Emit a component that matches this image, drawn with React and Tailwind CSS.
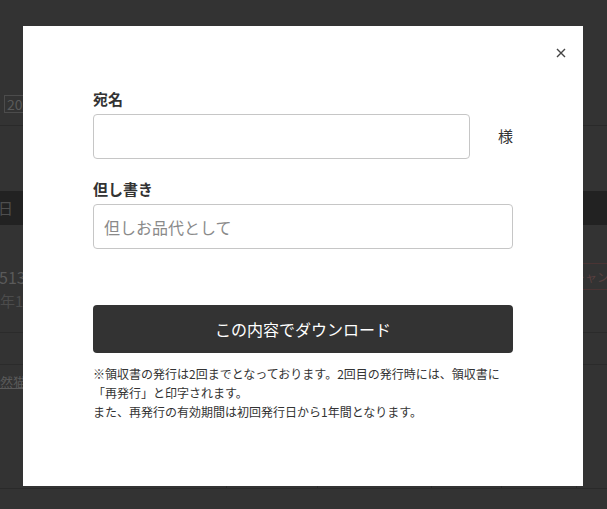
import React, { useState } from 'react';

const jp = { fontFamily: '"Noto Sans CJK JP", "Noto Sans", sans-serif' };

const ReceiptModal = () => {
  const [name, setName] = useState('');
  const [note, setNote] = useState('');

  return (
    <div className="absolute left-[23px] top-[26px] h-[460px] w-[560px] bg-white text-[#333]" style={jp}>
      {/* close */}
      <button className="absolute left-[532px] top-[21px] flex h-[12px] w-[12px] items-center justify-center text-[#444]">
        <svg width="10" height="10" viewBox="0 0 10 10" fill="none" stroke="currentColor" strokeWidth="1.4">
          <path d="M1 1L9 9M9 1L1 9" />
        </svg>
      </button>

      <div className="px-[70px] pt-[62px]">
        <label className="block text-[15px] font-bold leading-[22px]">宛名</label>
        <div className="mt-[4px] flex items-center">
          <input
            type="text"
            value={name}
            onChange={(e) => setName(e.target.value)}
            className="h-[45px] w-[377px] rounded-[4px] border border-[#c6c6c6] px-[10px] text-[16px] outline-none"
          />
          <span className="ml-[28px] text-[15px]">様</span>
        </div>

        <label className="mt-[19px] block text-[15px] font-bold leading-[22px]">但し書き</label>
        <input
          type="text"
          value={note}
          onChange={(e) => setNote(e.target.value)}
          placeholder="但しお品代として"
          className="mt-[4px] block h-[45px] w-full rounded-[4px] border border-[#c6c6c6] px-[10px] text-[16px] outline-none placeholder:text-[#8a8a8a]"
        />

        <button className="mt-[56px] flex h-[48px] w-full items-center justify-center rounded-[4px] bg-[#333] text-[16px] text-white">
          この内容でダウンロード
        </button>

        <p className="mt-[11px] text-[12px] leading-[19px]">
          ※領収書の発行は2回までとなっております。2回目の発行時には、領収書に「再発行」と印字されます。
          <br />
          また、再発行の有効期間は初回発行日から1年間となります。
        </p>
      </div>
    </div>
  );
};

const App = () => {
  return (
    <div className="relative h-[509px] w-[607px] overflow-hidden bg-[#333] text-[#5a5a5a]" style={jp}>
      {/* dimmed page behind */}
      <div className="h-[95px]" />
      <div className="flex h-[31px] items-start border-b border-[#2a2a2a]">
        <span className="ml-[4px] flex h-[18px] items-center border border-[#4c4c4c] px-[2px] text-[14px] leading-none">2020</span>
      </div>
      <div className="h-[65px]" />
      <div className="flex h-[34px] items-center bg-[#222] text-[15px] text-[#4e4e4e]">
        <span className="ml-[-2px]">日</span>
      </div>
      <div className="h-[38px]" />
      <div className="flex h-[27px] items-center justify-between">
        <span className="ml-[-1px] text-[16px]">513</span>
        <span className="flex h-[27px] w-[36px] items-center overflow-hidden whitespace-nowrap border border-r-0 border-[#4a3434] pl-[1px] text-[12px] text-[#5a4040]">キャンセル</span>
      </div>
      <div className="h-[21px] text-[15px] leading-[21px] text-[#4c4c4c]">年1</div>
      <div className="h-[22px] border-b border-[#2b2b2b]" />
      <div className="h-[32px] border-b border-[#2b2b2b]" />
      <div className="pt-[7px] text-[13px] underline">然猫</div>
      <div className="h-[78px]" />
      <div className="flex h-[19px] border-b border-[#2a2a2a]">
        <div className="w-[227px] border-r border-[#2a2a2a]" />
        <div className="w-[91px] border-r border-[#2a2a2a]" />
        <div className="w-[114px] border-r border-[#2a2a2a]" />
        <div className="w-[70px] border-r border-[#2a2a2a]" />
        <div className="w-[75px] border-r border-[#2a2a2a]" />
      </div>

      <ReceiptModal />
    </div>
  );
};

export default App;
